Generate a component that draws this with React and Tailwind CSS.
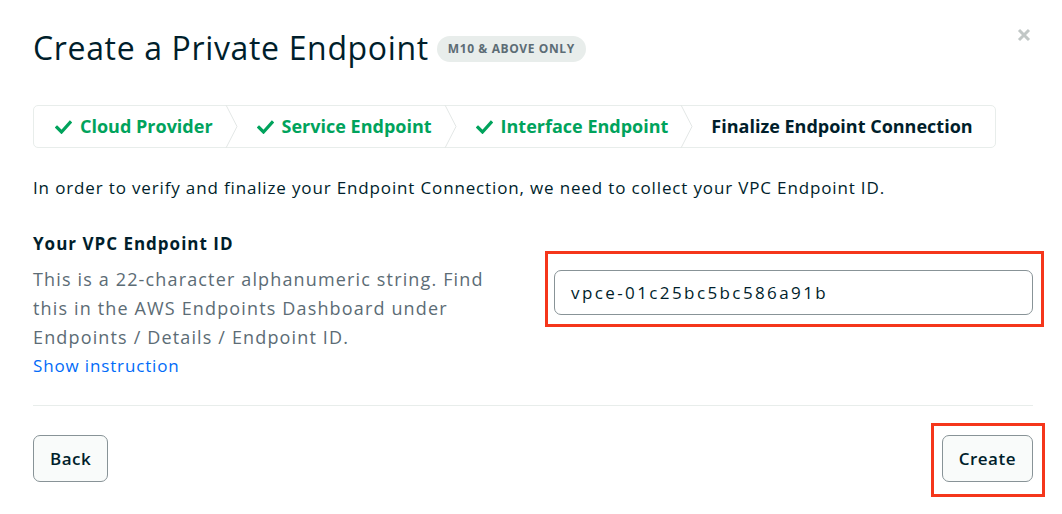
import React from "react";

const Check = () => (
  <svg width="17" height="14" viewBox="0 0 17 14" className="shrink-0">
    <path d="M2 7.5 L6.5 12 L15 2.5" fill="none" stroke="#00a35c" strokeWidth="3.2" strokeLinecap="square" />
  </svg>
);

const Chevron = () => (
  <svg width="14" height="43" viewBox="0 0 14 43" className="shrink-0">
    <path d="M1 0 L12 21.5 L1 43" fill="none" stroke="#e3e7e6" strokeWidth="1" />
  </svg>
);

export default function App() {
  return (
    <div className="w-[1062px] h-[514px] bg-white text-[#001e2b] relative overflow-hidden" style={{ fontFamily: "'Open Sans', 'Noto Sans', sans-serif" }}>
      <div className="pl-[33px] pr-[29px] pt-[27px] w-[1062px]">
        <div className="flex items-center justify-between">
          <div className="flex items-center gap-[8px]">
            <h1 className="text-[32px] leading-[42px] font-normal tracking-[0.65px]">Create a Private Endpoint</h1>
            <span className="mt-[2px] rounded-full bg-[#e8edeb] px-[11px] h-[26px] flex items-center text-[12px] font-bold text-[#5c6c75] uppercase tracking-[0.6px]">M10 &amp; Above Only</span>
          </div>
          <svg width="14" height="14" viewBox="0 0 14 14" className="mr-[2px] mt-[-26px]">
            <path d="M2 2 L12 12 M12 2 L2 12" stroke="#c1c7c6" strokeWidth="3" />
          </svg>
        </div>

        <div className="mt-[36px] w-[963px] h-[43px] border border-[#e8edeb] rounded-[5px] flex items-center text-[18px] font-bold">
          <div className="flex items-center gap-[8px] pl-[21px] pr-[12px]"><Check /><span className="text-[#00a35c]">Cloud Provider</span></div>
          <Chevron />
          <div className="flex items-center gap-[8px] pl-[18px] pr-[12px]"><Check /><span className="text-[#00a35c]">Service Endpoint</span></div>
          <Chevron />
          <div className="flex items-center gap-[8px] pl-[18px] pr-[12px]"><Check /><span className="text-[#00a35c]">Interface Endpoint</span></div>
          <Chevron />
          <div className="flex items-center pl-[17px]"><span>Finalize Endpoint Connection</span></div>
        </div>

        <p className="mt-[28px] text-[17px] leading-[24px] tracking-[0.85px]">In order to verify and finalize your Endpoint Connection, we need to collect your VPC Endpoint ID.</p>

        <div className="mt-[32px] flex justify-between">
          <div className="w-[470px]">
            <div className="text-[17px] font-bold leading-[24px] tracking-[1px]">Your VPC Endpoint ID</div>
            <p className="mt-[9px] text-[18px] leading-[29px] text-[#5c6c75] tracking-[1.15px]">This is a 22-character alphanumeric string. Find this in the AWS Endpoints Dashboard under Endpoints / Details / Endpoint ID.</p>
            <a className="block text-[17px] leading-[28px] text-[#016bf8] tracking-[0.85px]">Show instruction</a>
          </div>
          <div className="relative mt-[38px] w-[479px] h-[45px]">
            <div className="h-[45px] rounded-[7px] border border-[#889397] flex items-center px-[16px] text-[17px] text-[#001e2b] tracking-[2.4px]">vpce-01c25bc5bc586a91b</div>
            <span className="absolute left-[-9px] right-[-11px] top-[-19px] bottom-[-12px] border-[3px] border-[#f5361b]"></span>
          </div>
        </div>

        <div className="mt-[25px] h-px bg-[#e8edeb] w-[1000px]"></div>

        <div className="mt-[29px] flex justify-between w-[1000px]">
          <button className="h-[47px] px-[16px] rounded-[7px] border border-[#889397] bg-[#f9fbfa] text-[17px] font-semibold tracking-[0.5px]">Back</button>
          <div className="relative">
            <button className="h-[47px] px-[16px] rounded-[7px] border border-[#889397] bg-[#f9fbfa] text-[17px] font-semibold tracking-[0.5px]">Create</button>
            <span className="absolute left-[-11px] right-[-12px] top-[-12px] bottom-[-15px] border-[3px] border-[#f5361b]"></span>
          </div>
        </div>
      </div>
    </div>
  );
}
